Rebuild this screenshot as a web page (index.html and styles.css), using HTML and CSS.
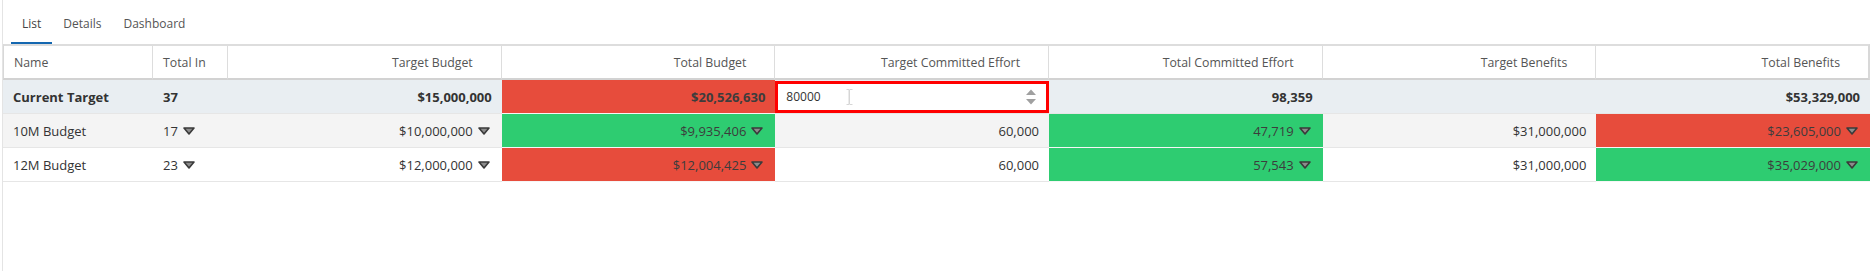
FILE: index.html
```html
<!DOCTYPE html>
<html lang="en">
<head>
<meta charset="utf-8">
<title>Targets</title>
<link rel="stylesheet" href="styles.css">
</head>
<body>
<div class="page">
  <nav class="tabs">
    <span class="tab active">List</span>
    <span class="tab">Details</span>
    <span class="tab">Dashboard</span>
  </nav>
  <table class="grid">
    <colgroup>
      <col class="c-name"><col class="c-in"><col class="c-num"><col class="c-num"><col class="c-num"><col class="c-num"><col class="c-num"><col class="c-num">
    </colgroup>
    <thead>
      <tr>
        <th class="left first">Name</th>
        <th class="left">Total In</th>
        <th>Target Budget</th>
        <th>Total Budget</th>
        <th>Target Committed Effort</th>
        <th>Total Committed Effort</th>
        <th>Target Benefits</th>
        <th class="last">Total Benefits</th>
      </tr>
    </thead>
    <tbody>
      <tr class="row-target">
        <td class="left">Current Target</td>
        <td class="left">37</td>
        <td>$15,000,000</td>
        <td class="red">$20,526,630</td>
        <td class="edit-cell">
          <div class="editor">
            <span class="editor-value">80000</span>
            <svg class="ibeam" width="7" height="16" viewBox="0 0 7 16"><path d="M0.5 0.5h2.5v15h-2.5M6.5 0.5h-2.5M4 15.5h2.5M3.5 0.5v15" fill="none" stroke="#d6d6d6" stroke-width="1"/></svg>
            <svg class="spinner" width="10" height="16" viewBox="0 0 10 16"><polygon points="0,6 5,0.5 10,6" fill="#a0a0a0"/><polygon points="0,10 10,10 5,15.5" fill="#a0a0a0"/></svg>
          </div>
        </td>
        <td>98,359</td>
        <td></td>
        <td>$53,329,000</td>
      </tr>
      <tr class="row-alt">
        <td class="left">10M Budget</td>
        <td class="left">17<svg class="tri" width="12" height="8" viewBox="0 0 12 8"><polygon points="1,1 11,1 6,7" fill="#8c8c8c" stroke="#3a3a3a" stroke-width="1.6" stroke-linejoin="round"/></svg></td>
        <td>$10,000,000<svg class="tri" width="12" height="8" viewBox="0 0 12 8"><polygon points="1,1 11,1 6,7" fill="#8c8c8c" stroke="#3a3a3a" stroke-width="1.6" stroke-linejoin="round"/></svg></td>
        <td class="green">$9,935,406<svg class="tri" width="12" height="8" viewBox="0 0 12 8"><polygon points="1,1 11,1 6,7" fill="#8c8c8c" stroke="#3a3a3a" stroke-width="1.6" stroke-linejoin="round"/></svg></td>
        <td>60,000</td>
        <td class="green">47,719<svg class="tri" width="12" height="8" viewBox="0 0 12 8"><polygon points="1,1 11,1 6,7" fill="#8c8c8c" stroke="#3a3a3a" stroke-width="1.6" stroke-linejoin="round"/></svg></td>
        <td>$31,000,000</td>
        <td class="red">$23,605,000<svg class="tri" width="12" height="8" viewBox="0 0 12 8"><polygon points="1,1 11,1 6,7" fill="#8c8c8c" stroke="#3a3a3a" stroke-width="1.6" stroke-linejoin="round"/></svg></td>
      </tr>
      <tr class="row-plain">
        <td class="left">12M Budget</td>
        <td class="left">23<svg class="tri" width="12" height="8" viewBox="0 0 12 8"><polygon points="1,1 11,1 6,7" fill="#8c8c8c" stroke="#3a3a3a" stroke-width="1.6" stroke-linejoin="round"/></svg></td>
        <td>$12,000,000<svg class="tri" width="12" height="8" viewBox="0 0 12 8"><polygon points="1,1 11,1 6,7" fill="#8c8c8c" stroke="#3a3a3a" stroke-width="1.6" stroke-linejoin="round"/></svg></td>
        <td class="red">$12,004,425<svg class="tri" width="12" height="8" viewBox="0 0 12 8"><polygon points="1,1 11,1 6,7" fill="#8c8c8c" stroke="#3a3a3a" stroke-width="1.6" stroke-linejoin="round"/></svg></td>
        <td>60,000</td>
        <td class="green">57,543<svg class="tri" width="12" height="8" viewBox="0 0 12 8"><polygon points="1,1 11,1 6,7" fill="#8c8c8c" stroke="#3a3a3a" stroke-width="1.6" stroke-linejoin="round"/></svg></td>
        <td>$31,000,000</td>
        <td class="green">$35,029,000<svg class="tri" width="12" height="8" viewBox="0 0 12 8"><polygon points="1,1 11,1 6,7" fill="#8c8c8c" stroke="#3a3a3a" stroke-width="1.6" stroke-linejoin="round"/></svg></td>
      </tr>
    </tbody>
  </table>
</div>
</body>
</html>
```

FILE: styles.css
```css
html, body {
  margin: 0;
  padding: 0;
  background: #ffffff;
}

body {
  font-family: "Open Sans", "Noto Sans", "Liberation Sans", sans-serif;
  color: #333333;
}

.page {
  margin-left: 2px;
  border-left: 1px solid #e4e4e4;
  height: 271px;
  box-sizing: border-box;
}

.tabs {
  display: flex;
  gap: 0;
  height: 44px;
  align-items: stretch;
  padding-left: 8px;
  box-sizing: border-box;
}

.tab {
  display: flex;
  align-items: center;
  padding: 5px 11px 0 11px;
  font-size: 12px;
  color: #555555;
  border-bottom: 2px solid transparent;
}

.tab.active {
  color: #444444;
  border-bottom-color: #1467b0;
}

.grid {
  table-layout: fixed;
  border-collapse: separate;
  border-spacing: 0;
  width: 1867px;
}

.c-name { width: 150px; }
.c-in { width: 75px; }
.c-num { width: 273.6px; }

.grid th {
  height: 36px;
  padding: 0 28px 0 10px;
  font-weight: normal;
  font-size: 12.3px;
  color: #555555;
  text-align: right;
  border-top: 2px solid #dddddd;
  border-bottom: 2px solid #d2d2d2;
  border-right: 1px solid #dddddd;
  box-sizing: border-box;
  white-space: nowrap;
}

.grid th.first {
  border-left: 1px solid #d8d8d8;
}

.grid th.last {
  border-right: 2px solid #d8d8d8;
}

.grid th.left,
.grid td.left {
  text-align: left;
}

.grid td {
  height: 34px;
  padding: 0 10px;
  font-size: 13px;
  text-align: right;
  border-bottom: 1px solid #e6e6e6;
  box-sizing: border-box;
  white-space: nowrap;
  color: #333333;
}

.row-target td {
  background: #e9eef2;
  font-weight: bold;
}

.row-alt td {
  background: #f4f4f4;
}

.row-plain td {
  background: #ffffff;
}

.grid td.red {
  background: #e74c3c;
  color: #3c3c3c;
  border-bottom-color: #f6f6f6;
}

.grid td.green {
  background: #2ecc71;
  color: #3c3c3c;
  border-bottom-color: #f6f6f6;
}

.tri {
  margin-left: 5px;
  margin-right: 2px;
  vertical-align: 1px;
}

.grid td.edit-cell {
  padding: 0;
  background: #e9eef2;
}

.editor {
  position: relative;
  display: flex;
  align-items: center;
  justify-content: space-between;
  height: 32px;
  box-sizing: border-box;
  border: 3px solid #ff0000;
  background: #ffffff;
  padding: 0 10px 0 8px;
  font-weight: normal;
  font-size: 12px;
  color: #333333;
  text-align: left;
}

.ibeam {
  position: absolute;
  left: 68px;
  top: 5px;
}
```
